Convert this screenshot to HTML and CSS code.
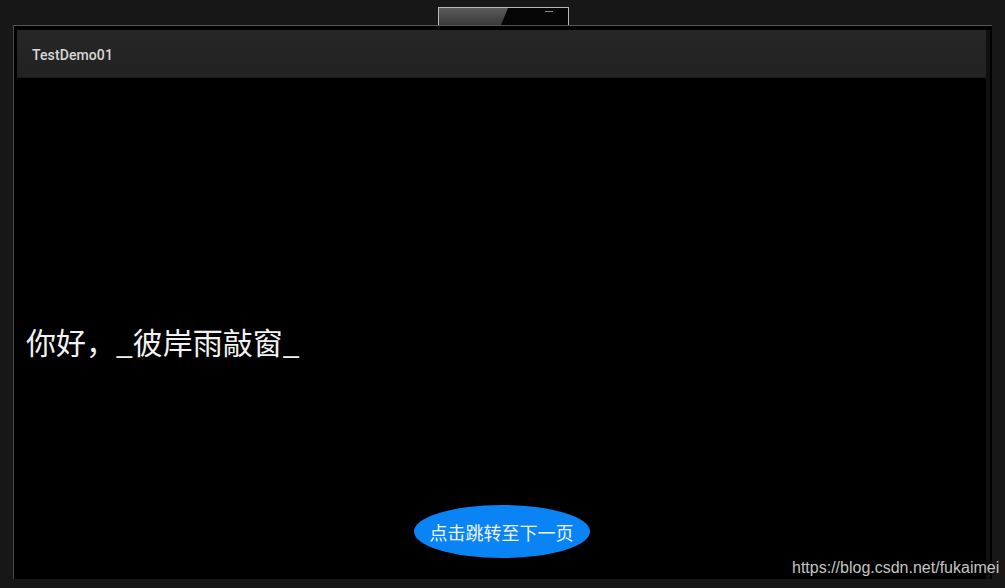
FILE: index.html
```html
<!DOCTYPE html>
<html lang="zh">
<head>
<meta charset="utf-8">
<title>TestDemo01</title>
<link rel="stylesheet" href="styles.css">
</head>
<body>
<div class="screen">
  <div class="topbar">
    <div class="thumb">
      <div class="thumb-dark"></div>
      <span class="thumb-label"></span>
    </div>
  </div>
  <div class="frame">
    <div class="app">
      <div class="toolbar"><span class="title">TestDemo01</span></div>
      <div class="content">
        <div class="greeting">你好，_彼岸雨敲窗_</div>
        <button class="next-btn">点击跳转至下一页</button>
      </div>
    </div>
  </div>
  <div class="watermark">https://blog.csdn.net/fukaimei</div>
</div>
</body>
</html>
```
FILE: styles.css
```css
html, body {
  margin: 0;
  padding: 0;
  background: #171717;
}
.screen {
  position: relative;
  width: 1005px;
  height: 588px;
  overflow: hidden;
  background: #171717;
}
.topbar {
  height: 25px;
  box-sizing: border-box;
  padding-top: 7px;
  padding-left: 438px;
}
.thumb {
  position: relative;
  width: 131px;
  height: 18px;
  box-sizing: border-box;
  border: 1px solid #b9b9b9;
  border-bottom: none;
  background: linear-gradient(180deg, #5a5a5a 0%, #3a3a3a 100%);
  overflow: hidden;
}
.thumb-dark {
  position: absolute;
  top: 0;
  bottom: 0;
  left: 62px;
  right: 0;
  background: #050505;
  clip-path: polygon(7px 0, 100% 0, 100% 100%, 0 100%);
}
.thumb-label {
  position: absolute;
  top: 3px;
  left: 106px;
  width: 8px;
  height: 1px;
  background: #8a8a8a;
}
.frame {
  margin-left: 13px;
  width: 979px;
  height: 554px;
  box-sizing: border-box;
  border-top: 1px solid #555;
  border-left: 1px solid #4a4a4a;
  background: #000;
  padding: 4px 2px 0 3px;
}
.app {
  height: 100%;
  display: flex;
  flex-direction: column;
  border-right: 4px solid #101010;
}
.toolbar {
  height: 48px;
  flex: none;
  background: linear-gradient(180deg, #262626 0%, #222 100%);
  display: flex;
  align-items: center;
  padding-left: 15px;
  padding-top: 2px;
  border-bottom: 1px solid #1a1a1a;
  box-sizing: border-box;
}
.title {
  font-family: Roboto, "Noto Sans", sans-serif;
  font-size: 14px;
  font-weight: 500;
  color: #d8d8d8;
  letter-spacing: 0.1px;
}
.content {
  flex: 1;
  display: flex;
  flex-direction: column;
  background: #000;
}
.greeting {
  margin-top: 242px;
  padding-left: 9px;
  font-family: "Noto Sans CJK SC", "Noto Sans", sans-serif;
  font-size: 30px;
  line-height: 42px;
  color: #f2f2f2;
}
.next-btn {
  margin: auto auto 21px;
  width: 176px;
  height: 53px;
  border: none;
  border-radius: 50%;
  background: #0a84f5;
  color: #eef5ff;
  font-family: "Noto Sans CJK SC", "Noto Sans", sans-serif;
  font-size: 18px;
  padding: 0;
}
.watermark {
  position: absolute;
  left: 792px;
  top: 558px;
  font-family: "Liberation Sans", Arial, sans-serif;
  font-size: 16px;
  line-height: 20px;
  color: #c4c4c4;
}
```
